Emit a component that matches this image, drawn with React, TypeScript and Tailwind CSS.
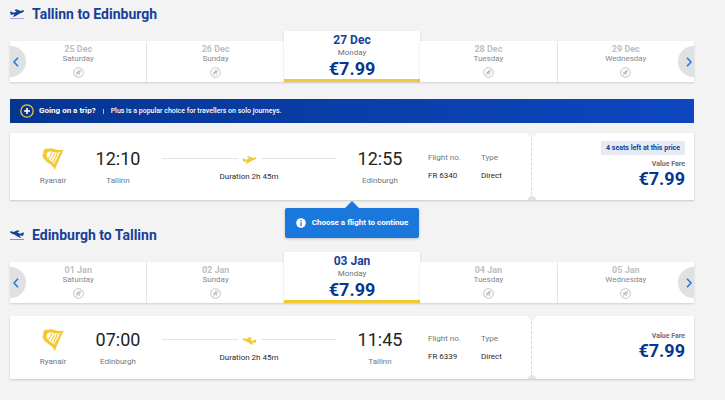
import React from "react";

type Day = { date: string; day: string; price?: string };

type Flight = {
  departTime: string;
  from: string;
  arriveTime: string;
  to: string;
  number: string;
  seats?: string;
};

function Plane({ className }: { className: string }) {
  return (
    <svg viewBox="0 0 42 24" className={className} fill="currentColor" aria-hidden="true">
      <path d="M0 8l4-.5 6 4 10-3L13 3l6-2.500 13 5.500 6-2c2-.5 4 0 4 1.500 0 2-1 3-3 4l-11 5L16 22l-8 2 6-8-8 1c-2 .3-3-.3-4-1.500z" />
    </svg>
  );
}

function Harp() {
  return (
    <svg viewBox="0 0 66 66" className="h-[22px] w-[22px] text-[#f1c933]" aria-hidden="true">
      <path
        fill="currentColor"
        d="M5 8C7 2 13 0 17 3c5-3 12-3 20 0 10 4 19 3 29 2-6 4-3 9-9 17L38 66C34 55 27 50 19 45 9 39 2 30 0 19c3 2 4 1 5-2-2-3-2-6 0-9z"
      />
      <path fill="#fff" d="M15 15c6-6 13-5 21-2 7 2 13 2 20 0-3 9-12 25-18 36-5-7-12-10-17-14-6-5-9-12-6-20z" />
      <path
        fill="none"
        stroke="currentColor"
        strokeWidth="3.500"
        d="M29 13c0 8-4 12-10 19M37 15c0 9-5 14-11 22M45 16c-1 11-6 17-12 26M53 15c-2 12-9 21-16 32"
      />
    </svg>
  );
}

function NoFlight() {
  return (
    <svg viewBox="0 0 24 24" className="mt-1 h-[11px] w-[11px] text-[#b9bdc3]" fill="none" stroke="currentColor" strokeWidth="2" aria-label="No flights">
      <circle cx="12" cy="12" r="10.500" />
      <path d="M6 19L18 5" />
      <path d="M7 13l10-3M12 7l2 10M8 10l2 5" strokeWidth="2.500" />
    </svg>
  );
}

function Chevron({ side }: { side: "left" | "right" }) {
  const left = side === "left";
  return (
    <button
      type="button"
      aria-label={left ? "Earlier dates" : "Later dates"}
      className={
        "absolute bottom-[5px] flex h-[31px] w-4 items-center bg-[#dfe1e3] text-[#2277d5] " +
        (left ? "left-0 justify-start rounded-r-full pl-[3px]" : "right-0 justify-end rounded-l-full pr-[2px]")
      }
    >
      <svg viewBox="0 0 6 10" className="h-[10px] w-[6px]" fill="none" stroke="currentColor" strokeWidth="1.500">
        <path d={left ? "M5 .7L1 5l4 4.300" : "M1 .7L5 5 1 9.300"} />
      </svg>
    </button>
  );
}

function Heading({ title, back }: { title: string; back?: boolean }) {
  return (
    <h2 className="flex h-5 items-center gap-2 text-[14px] font-bold text-[#17409a]">
      <span className="flex w-[14px] flex-col gap-[1px]">
        <Plane className={back ? "h-[8px] w-[14px] -scale-x-100" : "h-[8px] w-[14px]"} />
        <span className={back ? "h-px bg-[#7b93c5]" : "h-px bg-[#9fb0d4]"} />
      </span>
      {title}
    </h2>
  );
}

function Dates({ days }: { days: Day[] }) {
  return (
    <div className="relative mt-[7px] flex items-end">
      {days.map((d, i) =>
        d.price ? (
          <button
            key={d.date}
            type="button"
            aria-pressed="true"
            className="flex flex-1 flex-col items-center border-b-[3px] border-[#f1c933] bg-white pt-[2px] shadow-[0_1px_2px_rgba(0,0,0,0.18)]"
          >
            <span className="text-[12px] leading-[15px] font-bold text-[#17409a]">{d.date}</span>
            <span className="text-[8px] leading-[10px] text-[#6f747b]">{d.day}</span>
            <span className="text-[18px] leading-[21px] font-bold text-[#073590]">{d.price}</span>
          </button>
        ) : (
          <button
            key={d.date}
            type="button"
            className={
              "flex h-[41px] flex-1 flex-col items-center bg-white pt-1 shadow-[0_1px_2px_rgba(0,0,0,0.15)] " +
              (i === 0 || i === 3 ? "border-r border-[#f1f1f1]" : "")
            }
          >
            <span className="text-[9px] leading-[9px] font-bold text-[#bbbfc5]">{d.date}</span>
            <span className="text-[8px] leading-[9px] text-[#85898f]">{d.day}</span>
            <NoFlight />
          </button>
        )
      )}
      <Chevron side="left" />
      <Chevron side="right" />
    </div>
  );
}

function Stop({ time, city }: { time: string; city: string }) {
  return (
    <div className="flex w-11 flex-col items-center">
      <span className="text-[18px] leading-[22px] text-[#232323]">{time}</span>
      <span className="mt-[6px] text-[8px] leading-[10px] text-[#73777d]">{city}</span>
    </div>
  );
}

function Detail({ label, value }: { label: string; value: string }) {
  return (
    <dl className="text-[8px] leading-[10px] whitespace-nowrap">
      <dt className="text-[#73777d]">{label}</dt>
      <dd className="mt-2 text-[#2b2b2b]">{value}</dd>
    </dl>
  );
}

function FlightCard({ flight, back }: { flight: Flight; back?: boolean }) {
  return (
    <article
      className={
        "flex items-stretch bg-white shadow-[0_1px_2px_rgba(0,0,0,0.18)] " +
        (back ? "mt-[13px] min-h-[63px]" : "mt-[10px] min-h-[67px]")
      }
    >
      <div className="flex flex-1 items-center">
        <div className="flex w-[86px] flex-col items-center">
          <Harp />
          <span className="mt-[6px] text-[8px] leading-[10px] text-[#73777d]">Ryanair</span>
        </div>
        <Stop time={flight.departTime} city={flight.from} />
        <div className="mx-[22px] flex flex-1 flex-col items-center pt-[2px]">
          <div className="flex w-full items-center gap-1 text-[#f1c933]">
            <span className="h-px flex-1 bg-[#e3e3e3]" />
            <Plane className={back ? "mt-[3px] h-[8px] w-[15px] -scale-x-100" : "mt-[3px] h-[8px] w-[15px]"} />
            <span className="h-px flex-1 bg-[#e3e3e3]" />
          </div>
          <span className="mt-2 text-[8px] leading-[10px] text-[#2b2b2b]">Duration 2h 45m</span>
        </div>
        <Stop time={flight.arriveTime} city={flight.to} />
        <div className="ml-[26px] w-[53px]">
          <Detail label="Flight no." value={flight.number} />
        </div>
        <div className="w-[50px]">
          <Detail label="Type" value="Direct" />
        </div>
      </div>
      <div className="relative flex w-[163px] flex-col items-end justify-center border-l border-dashed border-[#d5d7da] pr-[9px] pb-[3px]">
        <span className="absolute top-0 -left-[4px] h-[4px] w-[8px] rounded-b-full bg-[#f3f3f3]" />
        <span className="absolute bottom-0 -left-[4px] h-[4px] w-[8px] rounded-t-full bg-[#e4e4e4]" />
        {flight.seats && (
          <span className="mb-1 bg-[#e6eaf4] px-[5px] text-[7px] leading-[14px] font-bold text-[#17409a]">
            {flight.seats}
          </span>
        )}
        <span className="text-[7px] leading-[10px] font-bold text-[#6a6f76]">Value Fare</span>
        <span className="text-[18px] leading-[20px] font-bold text-[#073590]">€7.99</span>
      </div>
    </article>
  );
}

export default function App() {
  return (
    <main
      className="min-h-screen bg-[#f3f3f3] pt-1 pr-[31px] pb-5 pl-[10px]"
      style={{ fontFamily: 'Roboto, "Liberation Sans", sans-serif' }}
    >
      <section>
        <Heading title="Tallinn to Edinburgh" />
        <Dates
          days={[
            { date: "25 Dec", day: "Saturday" },
            { date: "26 Dec", day: "Sunday" },
            { date: "27 Dec", day: "Monday", price: "€7.99" },
            { date: "28 Dec", day: "Tuesday" },
            { date: "29 Dec", day: "Wednesday" },
          ]}
        />
        <div className="mt-[17px] flex h-6 items-center bg-linear-to-r from-[#073590] to-[#0d47c0] pl-[10px] text-white">
          <svg viewBox="0 0 14 14" className="h-[14px] w-[14px]" fill="none" aria-hidden="true">
            <circle cx="7" cy="7" r="6.200" stroke="#f1c933" strokeWidth="1.300" />
            <path d="M7 4v6M4 7h6" stroke="#fff" strokeWidth="1.600" />
          </svg>
          <strong className="ml-[5px] text-[8px] font-bold">Going on a trip?</strong>
          <span className="mx-[7px] h-[5px] w-px bg-[#9fb4e6]" />
          <span className="text-[7px] font-medium">Plus is a popular choice for travellers on solo journeys.</span>
        </div>
        <div className="relative">
          <FlightCard
            flight={{
              departTime: "12:10",
              from: "Tallinn",
              arriveTime: "12:55",
              to: "Edinburgh",
              number: "FR 6340",
              seats: "4 seats left at this price",
            }}
          />
          <div
            role="status"
            className="absolute top-full left-1/2 mt-2 flex h-[30px] w-[134px] -translate-x-1/2 items-center justify-center gap-[6px] rounded-[2px] bg-[#1a78dd] text-[8px] font-bold whitespace-nowrap text-white shadow-[0_1px_3px_rgba(0,0,0,0.2)]"
          >
            <svg viewBox="0 0 14 7" className="absolute -top-[7px] left-[60px] h-[7px] w-[14px] text-[#1a78dd]" fill="currentColor">
              <path d="M0 7l7-7 7 7z" />
            </svg>
            <svg viewBox="0 0 10 10" className="h-[10px] w-[10px]" aria-hidden="true">
              <circle cx="5" cy="5" r="4.800" fill="#fff" />
              <path d="M5 2v1.300M5 4.200V8" stroke="#1a78dd" strokeWidth="1.300" />
            </svg>
            Choose a flight to continue
          </div>
        </div>
      </section>
      <section className="mt-[25px]">
        <Heading title="Edinburgh to Tallinn" back />
        <Dates
          days={[
            { date: "01 Jan", day: "Saturday" },
            { date: "02 Jan", day: "Sunday" },
            { date: "03 Jan", day: "Monday", price: "€7.99" },
            { date: "04 Jan", day: "Tuesday" },
            { date: "05 Jan", day: "Wednesday" },
          ]}
        />
        <FlightCard
          back
          flight={{ departTime: "07:00", from: "Edinburgh", arriveTime: "11:45", to: "Tallinn", number: "FR 6339" }}
        />
      </section>
    </main>
  );
}
